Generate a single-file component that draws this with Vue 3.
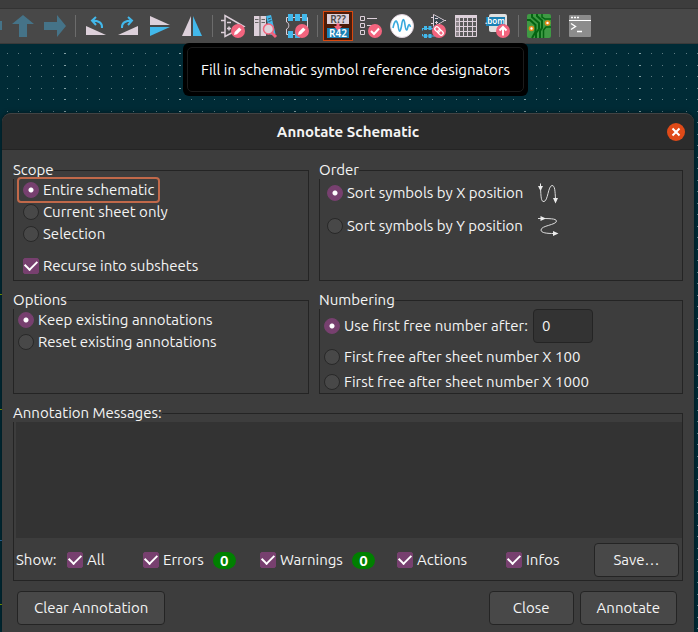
<script setup>
import { ref } from 'vue'

const scope = ref('all')
const order = ref('x')
const options = ref('keep')
const numbering = ref('first')
const startNumber = ref('0')
const recurse = ref(true)
const messages = ref('')
const filters = ref([
  { id: 'all', label: 'All', on: true },
  { id: 'errors', label: 'Errors', on: true, count: 0 },
  { id: 'warnings', label: 'Warnings', on: true, count: 0 },
  { id: 'actions', label: 'Actions', on: true },
  { id: 'infos', label: 'Infos', on: true },
])
</script>

<template>
  <div class="window">
    <div class="strip"></div>
    <nav class="toolbar">
      <button class="tool" aria-label="Navigate back">
        <svg viewBox="0 0 24 24"><path class="nav" d="M1 12 L10 1 V7 H23 V16 H10 V23Z" /></svg>
      </button>
      <button class="tool" aria-label="Navigate up">
        <svg viewBox="0 0 24 24"><path class="nav" d="M12 1 L23 10 H16 V23 H8 V10 H1Z" /></svg>
      </button>
      <button class="tool" aria-label="Navigate forward">
        <svg viewBox="0 0 24 24"><path class="nav" d="M23 12 L14 1 V8 H1 V16 H14 V23Z" /></svg>
      </button>
      <i class="sep"></i>
      <button class="tool" aria-label="Rotate left">
        <svg viewBox="0 0 24 24">
          <path class="light" d="M2 12 V21 H22Z" />
          <path class="bluestroke" d="M18 14 C18.500 9 15 6.500 8 6.500 M12 3 L8 6.500 L12 11" />
        </svg>
      </button>
      <button class="tool" aria-label="Rotate right">
        <svg viewBox="0 0 24 24">
          <path class="light" d="M22 12 V21 H2Z" />
          <path class="bluestroke" d="M6 14 C5.500 9 9 6.500 16 6.500 M12 3 L16 6.500 L12 11" />
        </svg>
      </button>
      <button class="tool" aria-label="Mirror vertically">
        <svg viewBox="0 0 24 24">
          <path class="light" d="M2 2 V11 H22Z" /><path class="blue" d="M2 13 H22 L2 22Z" />
        </svg>
      </button>
      <button class="tool" aria-label="Mirror horizontally">
        <svg viewBox="0 0 24 24">
          <path class="light" d="M11 2 V22 H2Z" /><path class="blue" d="M13 2 L22 22 H13Z" />
        </svg>
      </button>
      <i class="sep"></i>
      <button class="tool" aria-label="Symbol editor">
        <svg viewBox="0 0 24 24">
          <path class="line" d="M4 1.500 V22.500 L23 12.500Z M0 6.500 H4 M0 18.500 H4 M6 8.500 H10 M6 14.500 H10 M8 12.500 V16.500" stroke-width="1.500" />
          <circle class="pink" cx="17" cy="17" r="7" />
          <path class="white" d="M13 21 L13.700 18 L18.200 13.500 L20.500 15.800 L16 20.300Z" />
        </svg>
      </button>
      <button class="tool" aria-label="Symbol library browser">
        <svg viewBox="0 0 24 24">
          <path class="light" d="M1 2 H6.500 V22 H1Z M7.500 2 H13 V22 H7.500Z" />
          <path d="M2 5.500 H5.500 M2 8.500 H5.500 M8.500 5.500 H12 M8.500 8.500 H12" stroke="#666" />
          <path class="blue" d="M13 2 L18 1 L22.500 20 L17.500 21Z" />
          <path d="M15 5 L18 4 M15.500 7.500 L18.500 6.500" stroke="#356" />
          <path d="M18 18 L23 23" stroke="#f2647e" stroke-width="3" />
          <circle cx="15.500" cy="15" r="5" fill="#ddd4dc" stroke="#f2647e" stroke-width="1.500" />
        </svg>
      </button>
      <button class="tool" aria-label="Footprint editor">
        <svg viewBox="0 0 24 24">
          <path class="line" d="M1.500 8 V3.500 H22.500 V20.500 H1.500 V15 C4.500 14.500 4.500 8.500 1.500 8" />
          <path class="blue" d="M3 0 H8 V7 H3Z M10 0 H15 V7 H10Z M17 0 H22 V7 H17Z M3 17 H8 V24 H3Z M10 17 H15 V24 H10Z" />
          <circle class="pink" cx="17" cy="17" r="7" />
          <path class="white" d="M13 21 L13.700 18 L18.200 13.500 L20.500 15.800 L16 20.300Z" />
        </svg>
      </button>
      <i class="sep"></i>
      <button class="tool active" aria-label="Fill in schematic symbol reference designators">
        <svg viewBox="0 0 24 24">
          <rect x="1" y="0" width="22" height="10" fill="#ddd0da" />
          <rect x="1" y="14" width="22" height="10" fill="#1a81b5" />
          <path d="M10.500 9.500 H13.500 V12 H16 L12 17 L8 12 H10.500Z" fill="#f2647e" />
          <text x="12" y="9" class="ref dark">R??</text>
          <text x="12" y="23" class="ref">R42</text>
        </svg>
      </button>
      <button class="tool" aria-label="Electrical rules checker">
        <svg viewBox="0 0 24 24">
          <path class="line" d="M2.500 2.500 H6.500 V6.500 H2.500Z M2.500 9.500 H6.500 V13.500 H2.500Z M2.500 16.500 H6.500 V20.500 H2.500Z M9 4.500 H19 M9 11.500 H14" />
          <circle class="pink" cx="17" cy="17" r="7" />
          <path d="M13 17 L16 20 L21 14.500" fill="none" stroke="#fff" stroke-width="2" />
        </svg>
      </button>
      <button class="tool" aria-label="Simulator">
        <svg viewBox="0 0 24 24">
          <circle cx="12" cy="12" r="11.500" fill="#fff" stroke="#ddd0da" />
          <path d="M3 14 C4.500 6.500 6.500 4.500 8 11 C9 18.500 10 19.500 11.500 12 C12.500 4 14 3.500 15 11 C16 18 17 17 18 12.500 C18.700 10 19.500 9.500 20.500 13" fill="none" stroke="#39a9dc" stroke-width="1.600" />
        </svg>
      </button>
      <button class="tool" aria-label="Assign footprints">
        <svg viewBox="0 0 24 24">
          <path class="line" d="M11.500 0.500 V13 L22.500 6.500Z M9 3.500 H11.500 M9 9.500 H11.500 M22.500 6.500 H24" />
          <path d="M12 1.500 V12 L21.500 6.500Z" fill="#37454e" />
          <path d="M13 4.500 H16 M13 8.500 H16 M14.500 7 V10" stroke="#ddd0da" />
          <path d="M0.500 14.500 H13 M0.500 22 H13 M0.500 14 V16.500 M0.500 20 V22" fill="none" stroke="#42b8eb" />
          <path class="blue" d="M2 12 H5 V16 H2Z M6.500 12 H9.500 V16 H6.500Z M2 20 H5 V24 H2Z M6.500 20 H9.500 V24 H6.500Z M11 12 H13 V15 H11Z" />
          <circle class="pink" cx="17" cy="17" r="7" />
          <g fill="none" stroke="#fff" stroke-width="1.300">
            <rect x="12.500" y="13.500" width="6" height="4" rx="2" transform="rotate(45 15.500 15.500)" />
            <rect x="15.500" y="16.500" width="6" height="4" rx="2" transform="rotate(45 18.500 18.500)" />
          </g>
        </svg>
      </button>
      <button class="tool" aria-label="Symbol fields table">
        <svg viewBox="0 0 24 24">
          <path d="M1 1 H23 V23 H1Z" fill="#5a5a5a" />
          <path d="M1 1 H6 V23 H1Z" fill="#8d868b" />
          <path class="light" d="M1 1 H23 V4 H1Z" />
          <path class="line" d="M1.500 1.500 H22.500 V22.500 H1.500Z M5.500 4 V22 M9.500 4 V22 M13.500 4 V22 M18.500 4 V22 M1 7.500 H23 M1 12.500 H23 M1 17.500 H23" />
        </svg>
      </button>
      <button class="tool" aria-label="Generate bill of materials">
        <svg viewBox="0 0 24 24">
          <rect x="3" y="0" width="18" height="18" rx="2" fill="#e0e0e0" />
          <path d="M0 3 H19 V12 H0Z" fill="#1a81b5" />
          <text x="9" y="10" class="bom">.bom</text>
          <circle class="pink" cx="17" cy="17" r="7" />
          <path d="M17 21.500 V13.500 M13.500 16.500 L17 13 L20.500 16.500" fill="none" stroke="#fff" stroke-width="2" />
        </svg>
      </button>
      <i class="sep"></i>
      <button class="tool" aria-label="Open board editor">
        <svg viewBox="0 0 24 24">
          <rect width="24" height="24" rx="2" fill="#3f9a44" />
          <g fill="none" stroke="#046412" stroke-width="2">
            <path d="M0 6 H3 L8.500 11 V18 L5 24" />
            <path d="M5 0 V3 L12 9 V15 L9 19 V24" />
            <path d="M10 0 V2 L15 6.500 V14 L13 17 V24" />
            <path d="M24 13 H19 L16.500 16 V24" stroke-width="1.500" />
            <path d="M15 0 V3 L18 5 H24" stroke-width="1.500" />
          </g>
          <circle cx="4.500" cy="14.500" r="2" fill="#fff" stroke="#e28a16" stroke-width="1.600" />
          <circle cx="20.500" cy="9" r="2" fill="#fff" stroke="#e28a16" stroke-width="1.600" />
        </svg>
      </button>
      <i class="sep"></i>
      <button class="tool" aria-label="Scripting console">
        <svg viewBox="0 0 24 24">
          <rect x="1" y="1" width="22" height="22" rx="1" fill="#8c8c8c" />
          <path d="M1 6.500 H23" stroke="#fff" />
          <path d="M3 3.500 H5 M6 3.500 H8 M9 3.500 H11" stroke="#fff" stroke-width="1.500" />
          <path d="M3 9.500 L7.500 12.500 L3 15.500 M9 17.500 H14" fill="none" stroke="#fff" stroke-width="1.400" />
        </svg>
      </button>
    </nav>

    <main class="canvas">
      <svg class="grid" aria-hidden="true">
        <defs>
          <pattern id="dots" width="115" height="23" patternUnits="userSpaceOnUse" x="64" y="9">
            <g fill="#5f7d84">
              <rect v-for="x in [12, 23, 35, 47, 58, 69, 81, 92, 104]" :key="x" :x="x" width="1" height="1" />
              <rect v-for="x in [12, 23, 35, 47, 58, 69, 81, 92, 104]" :key="'b' + x" :x="x" y="12" width="1" height="1" />
            </g>
            <rect width="2" height="1" fill="#84a0a4" />
            <rect y="12" width="2" height="1" fill="#84a0a4" />
          </pattern>
        </defs>
        <rect width="100%" height="100%" fill="url(#dots)" />
        <path d="M0 250.500 H2 M0 365.500 H2 M0 560.500 H2" stroke="#84a100" />
        <path d="M0 496.500 H2" stroke="#2d6fa8" />
      </svg>
      <div class="tooltip" role="tooltip"><span>Fill in schematic symbol reference designators</span></div>

      <section class="dialog" role="dialog" aria-labelledby="dialog-title">
        <header class="titlebar">
          <h1 id="dialog-title">Annotate Schematic</h1>
          <button class="close" aria-label="Close window">
            <svg viewBox="0 0 18 18"><path d="M5.500 5.500 L12.500 12.500 M12.500 5.500 L5.500 12.500" /></svg>
          </button>
        </header>

        <div class="body">
          <div class="groups">
            <fieldset class="scope">
              <legend>Scope</legend>
              <label class="row focused"><input v-model="scope" type="radio" name="scope" value="all" />Entire schematic</label>
              <label class="row"><input v-model="scope" type="radio" name="scope" value="sheet" />Current sheet only</label>
              <label class="row"><input v-model="scope" type="radio" name="scope" value="selection" />Selection</label>
              <label class="row recurse"><input v-model="recurse" type="checkbox" />Recurse into subsheets</label>
            </fieldset>

            <fieldset class="order">
              <legend>Order</legend>
              <label class="row">
                <input v-model="order" type="radio" name="order" value="x" />Sort symbols by X position
                <svg viewBox="0 0 20 20">
                  <path d="M2.500 4 C3 14 3 19 6 18.500 C10 18 10 3 14 2.500 C17 2.500 17 8 17.500 16" />
                  <path class="head" d="M0 3 H2 V0.500 H3 V3 H5 L2.500 8Z M15 15 H20 L17.500 20.500Z" />
                </svg>
              </label>
              <label class="row">
                <input v-model="order" type="radio" name="order" value="y" />Sort symbols by Y position
                <svg viewBox="0 0 20 20">
                  <path d="M0 2.500 C12 2.500 18 2.500 18.500 5 C18.500 9 3 9.500 3 14 C3 17 9 17.500 16 17.500" />
                  <path class="head" d="M2.500 0 L8 2.500 L2.500 5Z M15 15 L20.500 17.500 L15 20Z" />
                </svg>
              </label>
            </fieldset>

            <fieldset class="options">
              <legend>Options</legend>
              <label class="row"><input v-model="options" type="radio" name="options" value="keep" />Keep existing annotations</label>
              <label class="row"><input v-model="options" type="radio" name="options" value="reset" />Reset existing annotations</label>
            </fieldset>

            <fieldset class="numbering">
              <legend>Numbering</legend>
              <div class="first">
                <label class="row"><input v-model="numbering" type="radio" name="numbering" value="first" />Use first free number after:</label>
                <input v-model="startNumber" class="number" type="text" aria-label="First free number after" />
              </div>
              <label class="row"><input v-model="numbering" type="radio" name="numbering" value="x100" />First free after sheet number X 100</label>
              <label class="row"><input v-model="numbering" type="radio" name="numbering" value="x1000" />First free after sheet number X 1000</label>
            </fieldset>
          </div>

          <fieldset class="messages">
            <legend><label for="messages">Annotation Messages:</label></legend>
            <textarea id="messages" v-model="messages" readonly></textarea>
            <div class="filters">
              <span>Show:</span>
              <div v-for="f in filters" :key="f.id" class="filter">
                <label class="row"><input v-model="f.on" type="checkbox" />{{ f.label }}</label>
                <b v-if="f.count !== undefined" class="badge">{{ f.count }}</b>
              </div>
              <button class="btn save">Save…</button>
            </div>
          </fieldset>

          <footer class="actions">
            <button class="btn clear">Clear Annotation</button>
            <button class="btn">Close</button>
            <button class="btn annotate">Annotate</button>
          </footer>
        </div>
      </section>
    </main>
  </div>
</template>

<style>
body {
  margin: 0;
  background: #002b36;
}
</style>

<style scoped>
* {
  box-sizing: border-box;
}

.window {
  display: flex;
  flex-direction: column;
  min-height: 100vh;
  overflow: hidden;
  color: #f4f4f4;
  font-family: Ubuntu, "Noto Sans", sans-serif;
  font-size: 15px;
  line-height: 20px;
}

button,
input,
textarea {
  font: inherit;
  color: inherit;
}

.strip {
  height: 9px;
  background: #3d3d3d;
  border-bottom: 1px solid #333;
}

.toolbar {
  display: flex;
  align-items: center;
  gap: 2px;
  height: 35px;
  margin-left: -24px;
  background: #484848;
  border-bottom: 1px solid #3a3a3a;
}

.tool {
  display: flex;
  flex: none;
  align-items: center;
  justify-content: center;
  width: 30px;
  height: 30px;
  padding: 0;
  background: none;
  border: 1px solid transparent;
}

.tool.active {
  background: #4c1c0a;
  border-color: #d9480f;
}

.tool svg {
  flex: none;
  width: 24px;
  height: 24px;
  overflow: visible;
}

.sep {
  flex: none;
  width: 1px;
  height: 22px;
  margin: 0 3px;
  background: #6c6c6c;
}

.nav { fill: #457388; }
.light { fill: #ddd0da; }
.blue { fill: #42b8eb; }
.pink { fill: #f2647e; }
.white { fill: #fff; }
.line { fill: none; stroke: #ddd0da; }
.bluestroke { fill: none; stroke: #42b8eb; stroke-width: 2; }

.ref,
.bom {
  fill: #fff;
  font-family: "Noto Sans", sans-serif;
  font-weight: 600;
  text-anchor: middle;
}

.ref { font-size: 10px; }
.ref.dark { fill: #484848; }
.bom { font-size: 8px; }

.canvas {
  position: relative;
  flex: 1;
  padding: 69px 4px 0 2px;
  background: #002b36;
}

.grid {
  position: absolute;
  inset: 0;
  width: 100%;
  height: 100%;
}

.tooltip {
  position: absolute;
  top: -1px;
  left: 183px;
  padding: 4px;
  background: #000;
  border-radius: 6px;
  color: #fff;
  white-space: nowrap;
}

.tooltip span {
  display: block;
  padding: 12px 13px 11px;
  border: 1px solid #1c1c1c;
  border-radius: 5px;
}

.dialog {
  position: relative;
  background: #3d3d3d;
  border-radius: 9px 9px 0 0;
  box-shadow: 0 0 5px rgba(0, 0, 0, 0.5);
}

.titlebar {
  display: grid;
  grid-template-columns: 1fr auto 1fr;
  align-items: center;
  height: 37px;
  padding: 0 9px;
  background: #2c2c2c;
  border-top: 1px solid #424242;
  border-bottom: 1px solid #242424;
  border-radius: 9px 9px 0 0;
}

h1 {
  grid-column: 2;
  margin: 0;
  font-size: 15px;
  font-weight: 700;
}

.close {
  justify-self: end;
  width: 18px;
  height: 18px;
  padding: 0;
  background: #e04a18;
  border: 0;
  border-radius: 50%;
}

.close svg {
  display: block;
  fill: none;
  stroke: #fff;
  stroke-width: 2;
}

.body {
  padding: 12px 11px 7px;
}

.groups {
  display: grid;
  grid-template-columns: 296fr 364fr;
  gap: 11px 10px;
}

fieldset {
  min-width: 0;
  margin: 0;
  padding: 0;
  border: 1px solid #242424;
}

legend {
  margin-left: -1px;
  padding: 0 0 2px;
  line-height: 15px;
}

.row {
  display: flex;
  align-items: center;
  gap: 4px;
  width: fit-content;
  height: 22px;
  padding: 0 4px;
  white-space: nowrap;
}

.scope {
  padding: 0 5px 3px;
}

.scope legend {
  margin-left: -6px;
}

.focused {
  outline: 2px solid #c1694a;
  border-radius: 2px;
}

.recurse {
  margin-top: 10px;
}

.order {
  padding: 0 3px;
}

.order legend {
  margin-left: -4px;
}

.order .row {
  height: 28px;
  margin-bottom: 5px;
}

.order svg {
  width: 20px;
  height: 20px;
  margin-left: 11px;
  overflow: visible;
  fill: none;
  stroke: #dcdcdc;
  stroke-width: 1;
}

.order .head {
  fill: #ececec;
  stroke: none;
}

.numbering {
  display: flex;
  flex-direction: column;
  gap: 3px;
}

.first {
  display: flex;
  align-items: center;
  gap: 1px;
}

.number {
  width: 60px;
  height: 34px;
  padding: 0 8px 2px;
  background: #333;
  border: 1px solid #242424;
  border-radius: 4px;
}

input[type="radio"],
input[type="checkbox"] {
  flex: none;
  width: 16px;
  height: 16px;
  margin: 0;
  appearance: none;
  background: #484848;
  border: 1px solid #282828;
}

input[type="radio"] {
  border-radius: 50%;
}

input[type="radio"]:checked {
  background: radial-gradient(circle, #fff 0 2px, #77406f 3px);
  border-color: #77406f;
}

input[type="checkbox"] {
  display: grid;
  place-items: center;
  border-radius: 2px;
}

input[type="checkbox"]:checked {
  background: #77406f;
  border-color: #77406f;
}

input[type="checkbox"]:checked::after {
  content: "";
  width: 10px;
  height: 6px;
  margin-bottom: 4px;
  border: solid #fff;
  border-width: 0 0 2px 2px;
  transform: rotate(-45deg);
}

.messages {
  margin-top: 11px;
  padding: 0 0 3px;
}

textarea {
  display: block;
  width: calc(100% - 2px);
  height: 116px;
  margin-left: 2px;
  padding: 4px;
  background: #333;
  border: 0;
  resize: none;
}

.filters {
  display: grid;
  grid-template-columns: 47px 76px 117px 137px 109px 1fr auto;
  align-items: center;
  margin-top: 5px;
  padding: 0 3px 0 2px;
}

.filter {
  display: flex;
  align-items: center;
  gap: 5px;
}

.badge {
  width: 23px;
  height: 17px;
  background: #008000;
  border-radius: 9px;
  color: #fff;
  line-height: 17px;
  text-align: center;
}

.btn {
  min-width: 85px;
  height: 34px;
  padding: 0 16px;
  background: #484848;
  border: 1px solid #242424;
  border-radius: 4px;
  white-space: nowrap;
}

.actions {
  display: flex;
  gap: 6px;
  margin-top: 10px;
  padding: 0 6px 0 4px;
}

.clear {
  margin-right: auto;
}
</style>
